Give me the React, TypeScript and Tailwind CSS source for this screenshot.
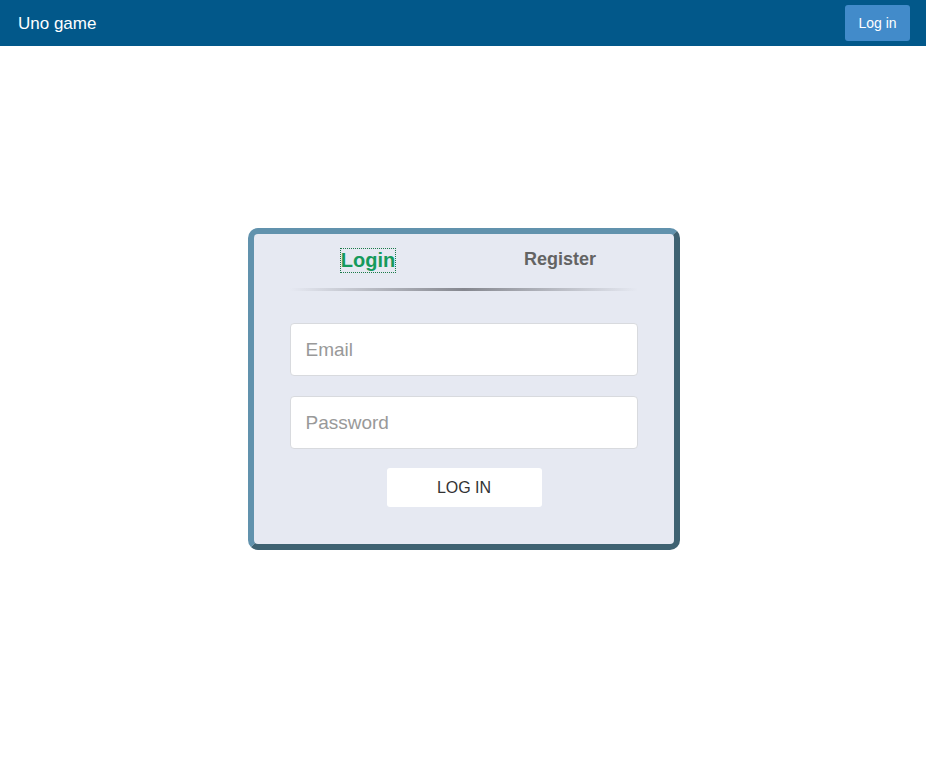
import React from "react";

export default function App() {
  return (
    <div className="min-h-[771px] bg-white font-['Liberation_Sans',Arial,sans-serif]">
      <nav className="flex h-[46px] items-center justify-between bg-[#02588a] pl-[18px] pr-[16px]">
        <span className="text-[17px] leading-none text-white">Uno game</span>
        <button className="h-[36px] w-[65px] rounded-[3px] bg-[#428bca] text-[14px] text-white">
          Log in
        </button>
      </nav>
      <main className="flex justify-center pl-[2px] pt-[182px]">
        <div className="h-[322px] w-[432px] rounded-[10px] border-[6px] border-t-[#6192ad] border-l-[#6192ad] border-r-[#3f6272] border-b-[#3f6272] bg-[#e6e9f2]">
          <div className="flex flex-col items-center pt-[15px]">
            <div className="flex w-[384px] items-start">
              <div className="flex flex-1 justify-center">
                <span className="text-[20px] leading-[23px] font-bold text-[#169a5c] outline outline-1 outline-dotted outline-[#1b7a4a]">
                  Login
                </span>
              </div>
              <div className="flex flex-1 justify-center">
                <span className="text-[18px] leading-[21px] font-bold text-[#636363]">Register</span>
              </div>
            </div>
            <div className="mt-[16px] h-[3px] w-[348px] bg-linear-to-r from-transparent via-[#85878f] to-transparent" />
            <input
              type="text"
              placeholder="Email"
              className="mt-[32px] mr-[1px] h-[53px] w-[348px] rounded-[4px] border border-[#d8dade] bg-white px-[15px] text-[19px] text-[#333] placeholder:text-[#999] outline-none"
            />
            <input
              type="password"
              placeholder="Password"
              className="mt-[20px] mr-[1px] h-[53px] w-[348px] rounded-[4px] border border-[#d8dade] bg-white px-[15px] text-[19px] text-[#333] placeholder:text-[#999] outline-none"
            />
            <button className="mt-[19px] h-[39px] w-[155px] rounded-[3px] bg-white text-[16px] text-[#333]">
              LOG IN
            </button>
          </div>
        </div>
      </main>
    </div>
  );
}
